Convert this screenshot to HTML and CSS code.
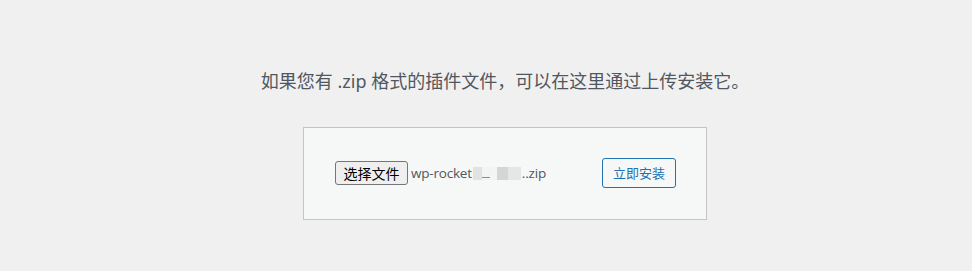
FILE: index.html
```html
<!DOCTYPE html>
<html lang="zh-CN">
<head>
<meta charset="utf-8">
<title>上传插件</title>
<link rel="stylesheet" href="styles.css">
</head>
<body>
<div class="upload-plugin">
  <p class="install-help">如果您有 .zip 格式的插件文件，可以在这里通过上传安装它。</p>
  <form class="wp-upload-form">
    <div class="file-field">
      <button type="button" class="file-btn">选择文件</button>
      <span class="file-name">wp-rocket<span class="mask"><span class="m1"></span><span class="m2"></span><span class="m3"></span><span class="m4"></span><span class="m5"></span></span>..zip</span>
    </div>
    <button type="button" class="install-btn">立即安装</button>
  </form>
</div>
</body>
</html>
```
FILE: styles.css
```css
html, body {
  margin: 0;
  padding: 0;
  background: #f0f0f1;
}
body {
  font-family: "Noto Sans", "Noto Sans CJK SC", sans-serif;
  color: #3c434a;
}
.upload-plugin {
  padding-left: 38px;
  text-align: center;
}
.install-help {
  margin: 0;
  padding-top: 65px;
  font-size: 18px;
  line-height: 32px;
  color: #50575e;
}
.wp-upload-form {
  display: inline-flex;
  align-items: center;
  justify-content: space-between;
  box-sizing: border-box;
  width: 404px;
  margin-top: 30px;
  padding: 30px 30px 31px 31px;
  border: 1px solid #c3c4c7;
  background: #f6f7f7;
}
.file-field {
  display: flex;
  align-items: center;
}
.file-btn {
  box-sizing: border-box;
  height: 24px;
  width: 73px;
  padding: 0;
  margin: 0 3px 0 0;
  border: 1px solid #767676;
  border-radius: 3px;
  background: #efefef;
  color: #000;
  font-family: "Noto Sans CJK SC", sans-serif;
  font-size: 14px;
  line-height: 22px;
}
.file-name {
  display: flex;
  align-items: center;
  font-family: "Open Sans", "Noto Sans", sans-serif;
  font-size: 13.5px;
  color: #50575e;
  letter-spacing: -0.2px;
}
.mask {
  display: inline-flex;
  align-items: stretch;
  height: 13px;
  margin: 1px 1px 0 1px;
}
.mask span {
  display: block;
}
.mask .m1 { width: 9px; background: #e2e2e3; }
.mask .m2 { width: 8px; background: linear-gradient(#f3f3f3 0 75%, #8a8f94 75% 85%, #f3f3f3 85%); }
.mask .m3 { width: 7px; background: #f4f4f4; }
.mask .m4 { width: 11px; background: #d4d5d6; }
.mask .m5 { width: 13px; background: #e6e6e7; }
.install-btn {
  box-sizing: border-box;
  height: 30px;
  width: 74px;
  padding: 0;
  border: 1px solid #2271b1;
  border-radius: 3px;
  background: #f6f7f7;
  color: #2271b1;
  font-family: "Noto Sans CJK SC", sans-serif;
  font-size: 13px;
  line-height: 28px;
}
```
